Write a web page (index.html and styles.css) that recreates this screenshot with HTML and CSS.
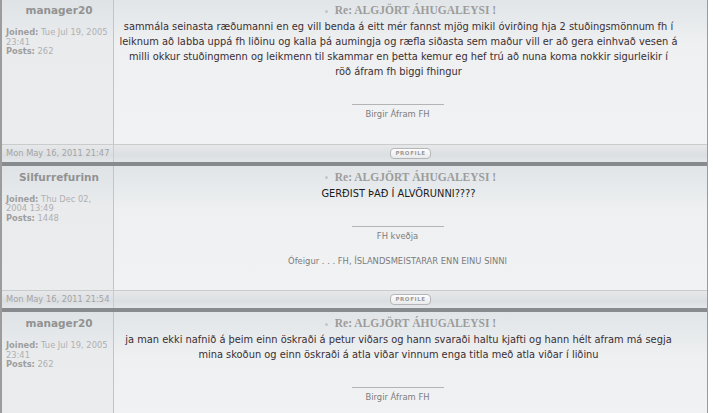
FILE: index.html
```html
<!DOCTYPE html>
<html lang="is">
<head>
  <meta charset="UTF-8" />
  <title>Re: ALGJÖRT ÁHUGALEYSI !</title>
  <link rel="stylesheet" href="styles.css">
</head>
<body>

  <div class="topic">

    <div class="post">
      <div class="post-main">
        <div class="author">
          <div class="name">manager20</div>
          <div class="details"><b>Joined:</b> Tue Jul 19, 2005<br>23:41<br><b>Posts:</b> 262</div>
        </div>
        <div class="content">
          <div class="subject"><span class="dot"></span>Re: ALGJÖRT ÁHUGALEYSI !</div>
          <div class="message">sammála seinasta ræðumanni en eg vill benda á eitt mér fannst mjög mikil óvirðing hja 2 stuðingsmönnum fh í<br>
            leiknum að labba uppá fh liðinu og kalla þá aumingja og ræfla siðasta sem maður vill er að gera einhvað vesen á<br>
            milli okkur stuðingmenn og leikmenn til skammar en þetta kemur eg hef trú að nuna koma nokkir sigurleikir í<br>
            röð áfram fh biggi fhingur</div>
          <div class="signature">Birgir Áfram FH</div>
        </div>
      </div>
      <div class="post-foot">
        <div class="date">Mon May 16, 2011 21:47</div>
        <div class="actions"><span class="btn-profile">PROFILE</span></div>
      </div>
    </div>

    <div class="post">
      <div class="post-main">
        <div class="author">
          <div class="name">Silfurrefurinn</div>
          <div class="details"><b>Joined:</b> Thu Dec 02,<br>2004 13:49<br><b>Posts:</b> 1448</div>
        </div>
        <div class="content">
          <div class="subject"><span class="dot"></span>Re: ALGJÖRT ÁHUGALEYSI !</div>
          <div class="message dark">GERÐIST ÞAÐ Í ALVÖRUNNI????</div>
          <div class="signature">FH kveðja<br><br>Ófeigur . . . FH, ÍSLANDSMEISTARAR ENN EINU SINNI</div>
        </div>
      </div>
      <div class="post-foot">
        <div class="date">Mon May 16, 2011 21:54</div>
        <div class="actions"><span class="btn-profile">PROFILE</span></div>
      </div>
    </div>

    <div class="post">
      <div class="post-main">
        <div class="author">
          <div class="name">manager20</div>
          <div class="details"><b>Joined:</b> Tue Jul 19, 2005<br>23:41<br><b>Posts:</b> 262</div>
        </div>
        <div class="content">
          <div class="subject"><span class="dot"></span>Re: ALGJÖRT ÁHUGALEYSI !</div>
          <div class="message">ja man ekki nafnið á þeim einn öskraði á petur viðars og hann svaraði haltu kjafti og hann hélt afram má segja<br>
            mina skoðun og einn öskraði á atla viðar vinnum enga titla með atla viðar í liðinu</div>
          <div class="signature">Birgir Áfram FH</div>
        </div>
      </div>
      <div class="post-foot">
        <div class="date">Mon May 16, 2011 22:03</div>
        <div class="actions"><span class="btn-profile">PROFILE</span></div>
      </div>
    </div>

  </div>

</body>
</html>
```

FILE: styles.css
```css
body {
  margin: 0;
  padding: 0;
  background-color: #fff;
  font-family: 'DejaVu Sans', Verdana, sans-serif;
  color: #333;
}

.topic {
  width: 705px;
  margin-top: -1px;
  border-left: 2px solid #9c9c9c;
  border-right: 1px solid #9a9a9a;
}

.post {
  border-bottom: 4px solid #888b8e;
}

.post-main {
  display: grid;
  grid-template-columns: 112px 1fr;
}

.author {
  border-right: 1px solid #c2c4c6;
  background: linear-gradient(#dfe3e6, #e9ebed 40px, #eaeced);
  padding: 4px 1px 0 4px;
}

.name {
  text-align: center;
  font-weight: bold;
  font-size: 10.5px;
  line-height: 14px;
  color: #929292;
}

.details {
  margin-top: 11px;
  font-size: 8.3px;
  line-height: 9.5px;
  white-space: nowrap;
  color: #b0b0b0;
}

.details b {
  color: #9e9e9e;
}

.content {
  background: linear-gradient(#e1e5e8, #eef0f1 45px, #f1f2f3);
  padding: 4px 0 23px 0;
}

.subject {
  text-align: center;
  font-family: 'Liberation Serif', 'Times New Roman', serif;
  font-weight: bold;
  font-size: 11.5px;
  line-height: 14px;
  color: #9c9c9c;
}

.dot {
  display: inline-block;
  width: 3px;
  height: 3px;
  border-radius: 50%;
  background-color: #c4c6c8;
  margin-right: 7px;
  vertical-align: middle;
}

.message {
  margin-top: 2px;
  padding: 0 24px 0 0;
  text-align: center;
  font-size: 9.85px;
  line-height: 15px;
  white-space: nowrap;
  color: #3a2e33;
}

.message.dark {
  color: #1c1c1c;
}

.signature {
  margin: 27px 26px 0 0;
  text-align: center;
  font-size: 8.4px;
  line-height: 12.5px;
  color: #7c7c7c;
}

.signature::before {
  content: "";
  display: block;
  width: 92px;
  margin: 0 auto 1px;
  border-top: 1px solid #b4b4b4;
  position: relative;
  top: -2px;
}

.post-foot {
  display: grid;
  grid-template-columns: 112px 1fr;
  height: 17px;
  border-top: 1px solid #c9cbcd;
  background: linear-gradient(#e6e8ea, #dcdfe2 60%, #e4e6e8);
}

.date {
  border-right: 1px solid #c9cbcd;
  padding-left: 4px;
  font-size: 8.3px;
  line-height: 17px;
  white-space: nowrap;
  color: #a4a4a4;
}

.actions {
  display: flex;
  align-items: center;
  justify-content: center;
}

.btn-profile {
  display: inline-block;
  padding: 1px 4px;
  border: 1px solid #b4b6b8;
  border-radius: 4px;
  background: linear-gradient(#fdfdfd, #e9eaeb);
  font-size: 5.5px;
  font-weight: bold;
  letter-spacing: 0.6px;
  line-height: 7px;
  color: #9a9a9a;
}
```
